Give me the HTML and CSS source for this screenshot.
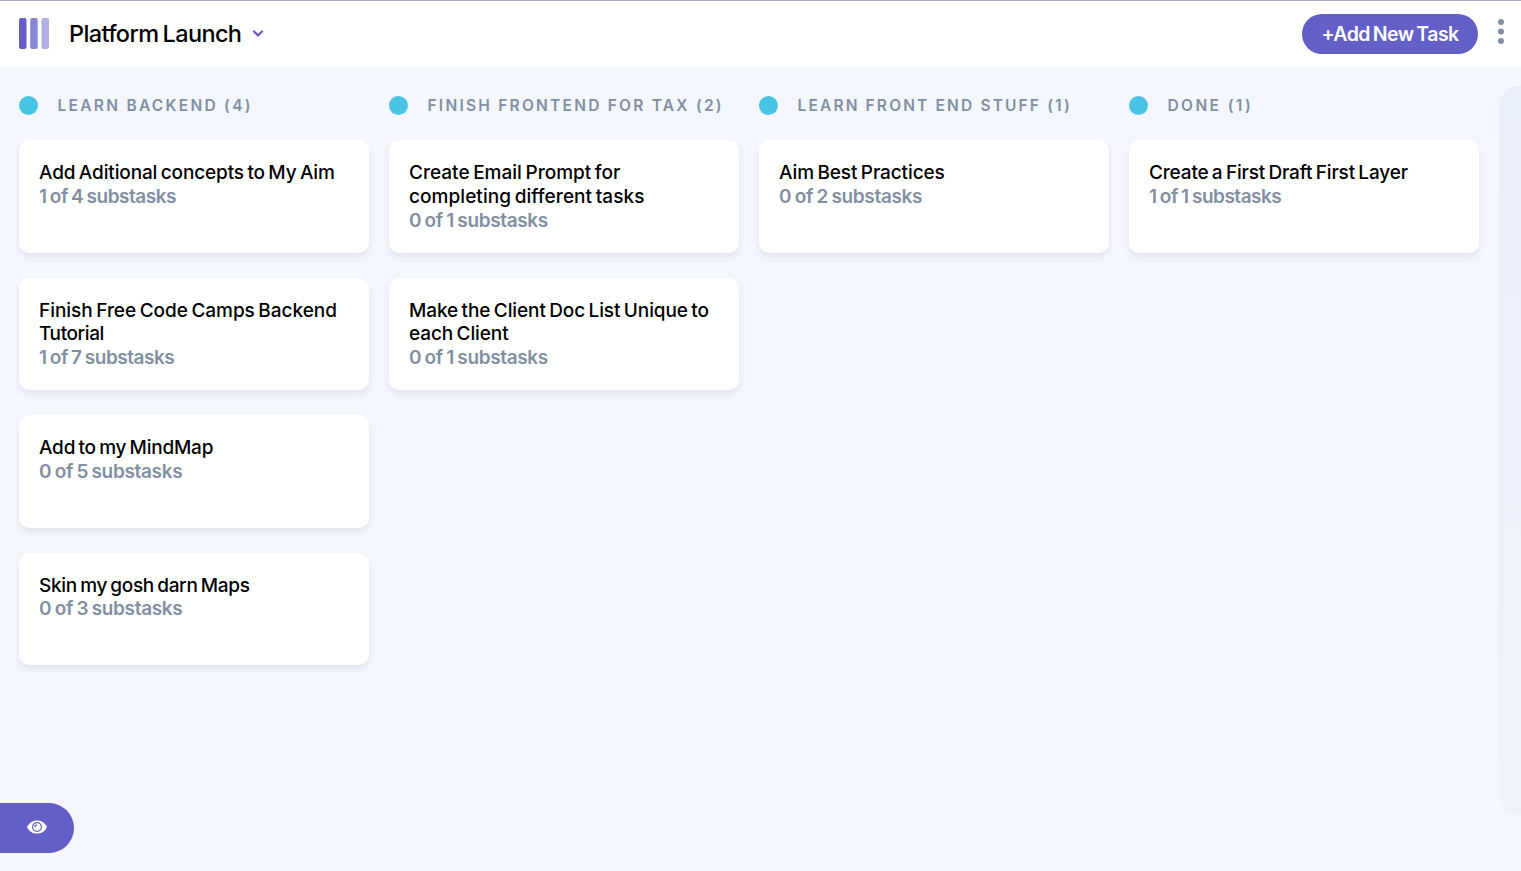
FILE: index.html
```
<!DOCTYPE html>
<html lang="en">
<head>
<meta charset="utf-8">
<title>Platform Launch</title>
<link rel="stylesheet" href="styles.css">
</head>
<body>
<header class="topbar">
  <svg class="logo" width="30" height="31" viewBox="0 0 30 31"><g fill="#635fc7"><rect width="7.5" height="31" rx="2"/><rect x="11.2" width="7.5" height="31" rx="2" opacity=".75"/><rect x="22.5" width="7.5" height="31" rx="2" opacity=".5"/></g></svg>
  <h1 class="board-name">Platform Launch</h1>
  <svg class="chevron" width="12" height="9" viewBox="0 0 12 9"><path d="M1.300 1.800 6 6.400l4.700-4.600" fill="none" stroke="#635fc7" stroke-width="2.200"/></svg>
  <button class="add-task">+Add New Task</button>
  <svg class="menu" width="6" height="26" viewBox="0 0 6 26"><g fill="#828fa3"><circle cx="3" cy="3" r="3"/><circle cx="3" cy="12.500" r="3"/><circle cx="3" cy="22" r="3"/></g></svg>
</header>
<main class="board">
  <section class="column">
    <h2 class="column-head"><span class="dot"></span><span class="label l1">LEARN BACKEND (4)</span></h2>
    <article class="card"><h3><span class="t1">Add Aditional concepts to My Aim</span></h3><p><span class="s1">1 of 4 substasks</span></p></article>
    <article class="card"><h3><span class="t2">Finish Free Code Camps Backend</span><br><span class="t3">Tutorial</span></h3><p><span class="s1">1 of 7 substasks</span></p></article>
    <article class="card"><h3><span class="t4">Add to my MindMap</span></h3><p><span class="s3">0 of 5 substasks</span></p></article>
    <article class="card"><h3><span class="t5">Skin my gosh darn Maps</span></h3><p><span class="s3">0 of 3 substasks</span></p></article>
  </section>
  <section class="column">
    <h2 class="column-head"><span class="dot"></span><span class="label">FINISH FRONTEND FOR TAX (2)</span></h2>
    <article class="card"><h3><span class="t6">Create Email Prompt for</span><br><span class="t7">completing different tasks</span></h3><p><span class="s4">0 of 1 substasks</span></p></article>
    <article class="card"><h3><span class="t8">Make the Client Doc List Unique to</span><br><span class="t8">each Client</span></h3><p><span class="s4">0 of 1 substasks</span></p></article>
  </section>
  <section class="column">
    <h2 class="column-head"><span class="dot"></span><span class="label l3">LEARN FRONT END STUFF (1)</span></h2>
    <article class="card"><h3><span class="t8">Aim Best Practices</span></h3><p><span class="s3">0 of 2 substasks</span></p></article>
  </section>
  <section class="column">
    <h2 class="column-head"><span class="dot"></span><span class="label l4">DONE (1)</span></h2>
    <article class="card"><h3><span class="t11">Create a First Draft First Layer</span></h3><p><span class="s1">1 of 1 substasks</span></p></article>
  </section>
  <div class="new-column"></div>
</main>
<button class="show-sidebar" aria-label="Show sidebar">
  <svg width="20" height="14" viewBox="0 0 20 14"><path d="M0 7C2.200 2.500 5.600.4 10 .4S17.800 2.500 20 7c-2.200 4.500-5.600 6.600-10 6.600S2.200 11.500 0 7Z" fill="#fff"/><circle cx="10" cy="7" r="4.400" fill="none" stroke="#635fc7" stroke-width="1.200"/><path d="M9.800 4.200a2 2 0 0 1-2.600 2.600A2.900 2.900 0 0 1 9.800 4.200Z" fill="#635fc7"/></svg>
</button>
</body>
</html>
```
FILE: styles.css
```
* { box-sizing: border-box; }
html, body { height: 100%; overflow: hidden; }
body {
  margin: 0;
  display: flex;
  flex-direction: column;
  background: #f4f7fd;
  color: #000;
  font-family: Inter, sans-serif;
}
h1, h2, h3, p { margin: 0; white-space: nowrap; }
button { border: 0; font-family: inherit; }
svg { display: block; flex: none; }
.topbar {
  flex: none;
  display: flex;
  align-items: flex-start;
  height: 66px;
  padding: 0 17px 0 19px;
  border-top: 1px solid #a3aeca;
  background: #fff;
}
.logo { margin-top: 17px; }
.board-name { margin: 18px 0 0 20px; width: 173px; font-size: 23.5px; line-height: 30px; font-weight: 500; letter-spacing: -.63px; word-spacing: -1.5px; }
.chevron { margin: 28px 0 0 10px; }
.add-task {
  width: 176px;
  height: 40px;
  margin: 13px 0 0 auto;
  padding: 0;
  border-radius: 20px;
  background: #635fc7;
  color: #fff;
  font-size: 19.5px;
  font-weight: 600;
  letter-spacing: -.55px;
  word-spacing: -1.5px;
}
.menu { margin: 18px 0 0 20px; }
.board { flex: 1; display: flex; gap: 20px; padding: 20px 0 57px 19px; overflow: hidden; }
.column { flex: none; width: 350px; }
.column-head { display: flex; align-items: center; height: 39px; margin-bottom: 15px; }
.dot { width: 19px; height: 19px; margin-right: 19.5px; border-radius: 50%; background: #49c4e5; }
.label { color: #828fa3; font-size: 15.5px; font-weight: 600; letter-spacing: 2.24px; }
.l1 { letter-spacing: 2.28px; }
.l3 { letter-spacing: 2.15px; }
.l4 { letter-spacing: 2.4px; }
.card {
  height: 112.5px;
  margin-bottom: 25px;
  padding: 21px 20px 19px;
  border-radius: 10px;
  background: #fff;
  box-shadow: 0 4px 6px rgba(54, 78, 126, .1);
  font-size: 19px;
  line-height: 23.75px;
  word-spacing: -1.5px;
}
.card h3 { font-size: inherit; font-weight: 500; }
.card p { color: #828fa3; font-weight: 600; word-spacing: -1px; }
/* Per-line tracking */
.t1 { letter-spacing: -.13px; }
.t2 { letter-spacing: -.03px; }
.t3 { letter-spacing: -.4px; }
.t4 { letter-spacing: -.22px; }
.t5 { letter-spacing: -.31px; }
.t6 { letter-spacing: .01px; }
.t7 { letter-spacing: .06px; }
.t8 { letter-spacing: -.1px; }
.t11 { letter-spacing: -.17px; }
.s1 { letter-spacing: -.49px; }
.s3 { letter-spacing: -.33px; }
.s4 { letter-spacing: -.36px; }
.new-column { flex: none; width: 22px; border-radius: 20px 0 0 20px; background: linear-gradient(#e9effa, rgba(233, 239, 250, .5)); }
.show-sidebar {
  position: fixed;
  left: 0;
  bottom: 18px;
  display: flex;
  align-items: center;
  width: 74px;
  height: 50px;
  padding: 0 0 2px 27px;
  border-radius: 0 25px 25px 0;
  background: #635fc7;
}
```
